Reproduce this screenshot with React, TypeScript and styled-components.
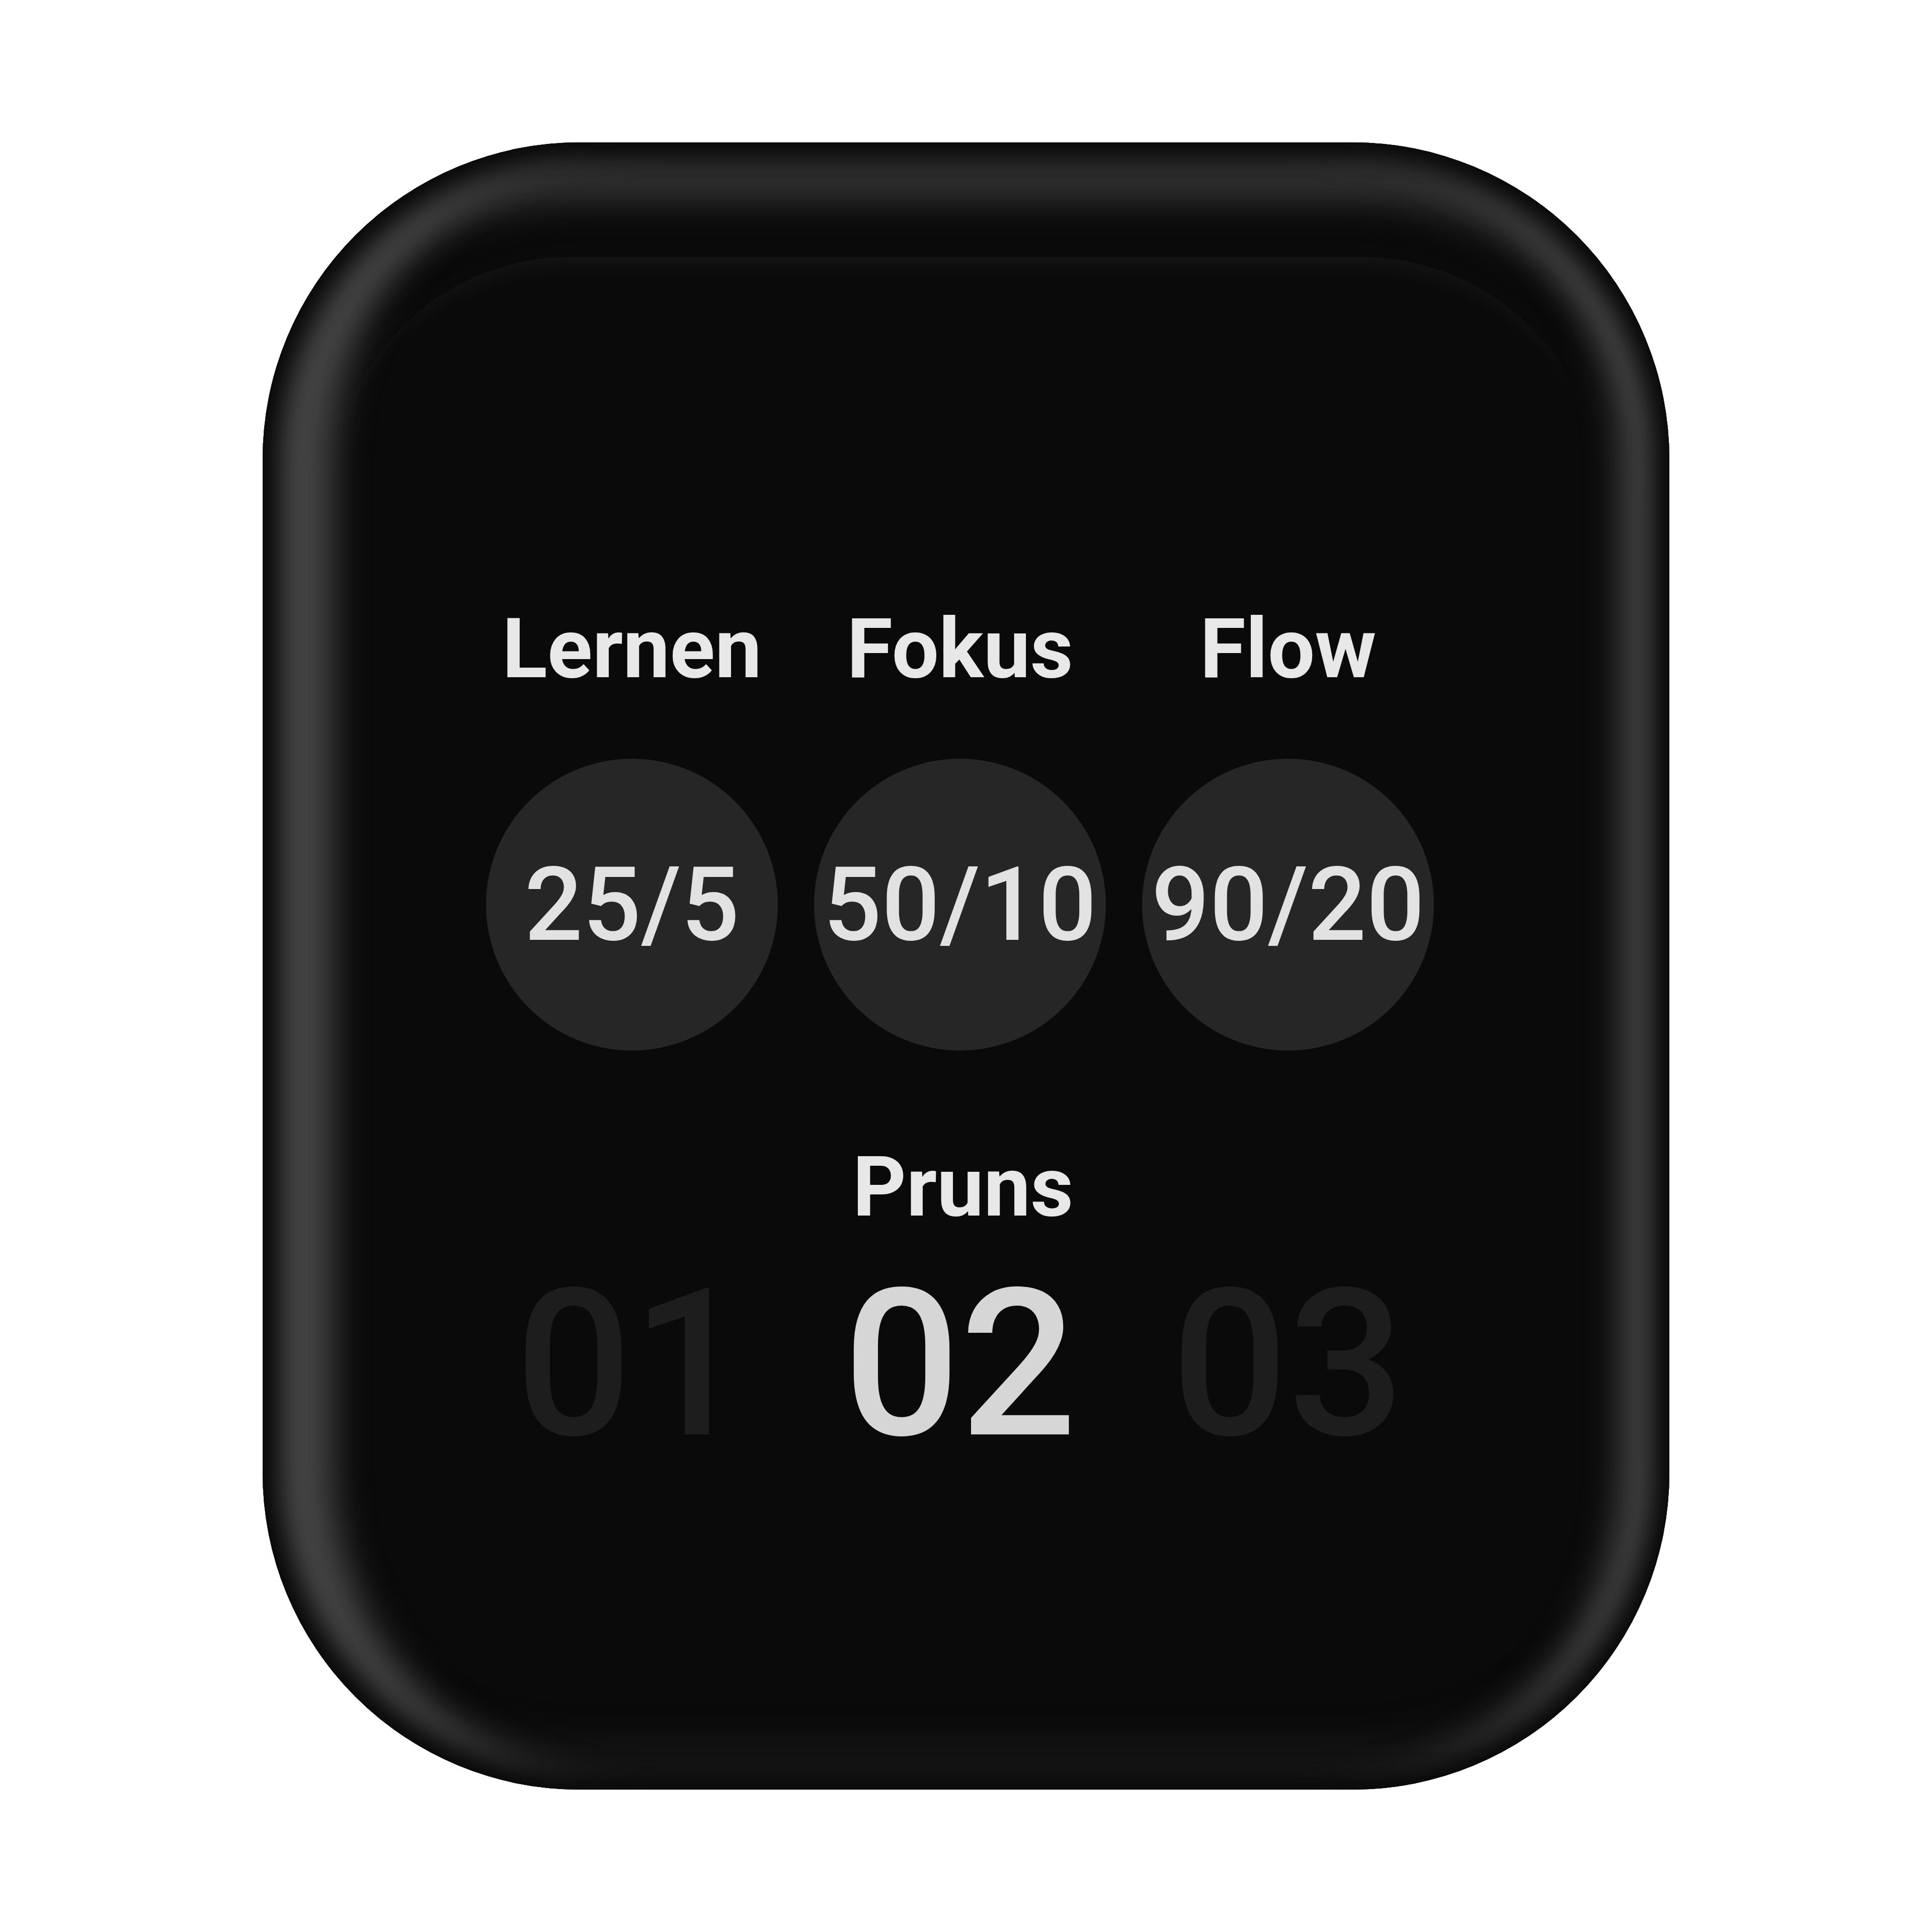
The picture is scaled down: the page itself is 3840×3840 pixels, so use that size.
import React from 'react';
import styled, { createGlobalStyle } from 'styled-components';

const GlobalStyle = createGlobalStyle`
  html, body {
    margin: 0;
    padding: 0;
    background: #ffffff;
  }
  body {
    font-family: Roboto, "Noto Sans", "Liberation Sans", sans-serif;
  }
`;

const Stage = styled.div`
  width: 3840px;
  height: 3840px;
  display: flex;
  align-items: center;
  justify-content: center;
`;

const Watch = styled.div`
  width: 2796px;
  height: 3274px;
  box-sizing: border-box;
  border-radius: 630px;
  background: #0a0a0a;
  box-shadow:
    inset 0 0 50px 35px #070707,
    inset 150px 0 70px -10px #464646,
    inset -105px 0 70px -10px #4a4a4a,
    inset 0 125px 70px -10px #343434,
    inset 0 -110px 60px -10px #161616;
  padding: 228px 140px 100px 140px;
  display: flex;
`;

const Screen = styled.div`
  flex: 1;
  border-radius: 470px;
  box-shadow: inset 0 60px 50px -45px rgba(255, 255, 255, 0.05);
  padding: 682px 12px 0 0;
  display: flex;
  flex-direction: column;
  align-items: center;
`;

const Columns = styled.div`
  display: grid;
  grid-template-columns: repeat(3, 580px);
  column-gap: 72px;
  margin-right: 12px;
`;

const Preset = styled.div`
  display: flex;
  flex-direction: column;
  align-items: center;
  gap: 121px;
`;

const Label = styled.div`
  font-size: 166px;
  line-height: 194px;
  font-weight: 700;
  color: #e8e8e8;
  text-align: center;
`;

const Dial = styled.div`
  width: 580px;
  height: 580px;
  border-radius: 50%;
  background: #262626;
  display: flex;
  align-items: center;
  justify-content: center;
  font-size: 204px;
  font-weight: 500;
  color: #e2e2e2;
`;

const Runs = styled.div`
  margin-top: 175px;
  display: flex;
  flex-direction: column;
  align-items: center;
  gap: 16px;
`;

const RunNumber = styled.div<{ $active?: boolean }>`
  font-size: 408px;
  line-height: 478px;
  font-weight: 500;
  text-align: center;
  color: ${(p) => (p.$active ? '#d6d6d6' : '#1d1d1d')};
`;

const presets = [
  { name: 'Lernen', value: '25/5' },
  { name: 'Fokus', value: '50/10' },
  { name: 'Flow', value: '90/20' },
];

const runs = ['01', '02', '03'];

export default function App() {
  return (
    <>
      <GlobalStyle />
      <Stage>
        <Watch>
          <Screen>
            <Columns>
              {presets.map((p) => (
                <Preset key={p.name}>
                  <Label>{p.name}</Label>
                  <Dial>{p.value}</Dial>
                </Preset>
              ))}
            </Columns>
            <Runs>
              <Label>Pruns</Label>
              <Columns>
                {runs.map((r) => (
                  <RunNumber key={r} $active={r === '02'}>
                    {r}
                  </RunNumber>
                ))}
              </Columns>
            </Runs>
          </Screen>
        </Watch>
      </Stage>
    </>
  );
}
